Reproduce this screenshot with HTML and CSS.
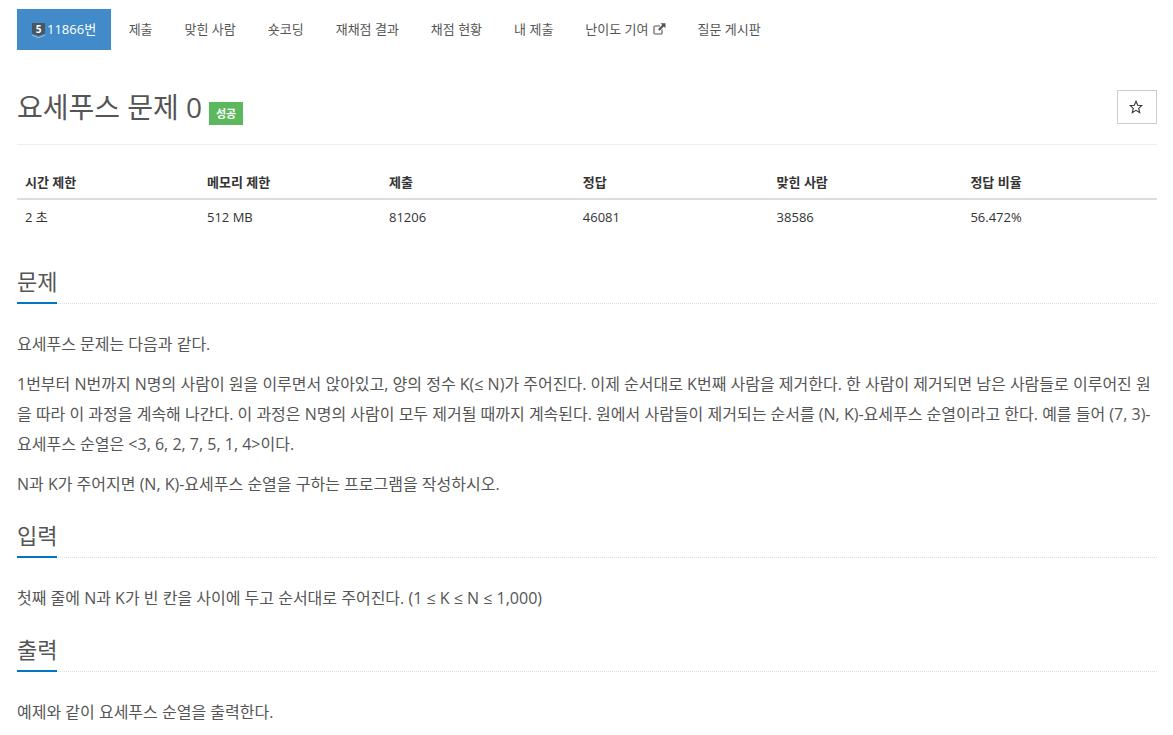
FILE: index.html
```html
<!DOCTYPE html>
<html lang="ko">
<head>
  <meta charset="UTF-8">
  <title>11866번: 요세푸스 문제 0</title>
  <link rel="stylesheet" href="styles.css">
</head>
<body>
  <ul class="tabs">
    <li class="active">
      <a href="#">
        <svg class="tier" width="13" height="15" viewBox="0 0 13 15"><path d="M0 0H13V10.5L6.5 13 0 10.5Z" fill="#4a5563"/><path d="M0 12.2L6.5 14.6 13 12.2" fill="none" stroke="#a9bccd" stroke-width="1"/><text x="6.5" y="9.8" text-anchor="middle" class="tier-num">5</text></svg>
        11866번
      </a>
    </li>
    <li><a href="#">제출</a></li>
    <li><a href="#">맞힌 사람</a></li>
    <li><a href="#">숏코딩</a></li>
    <li><a href="#">재채점 결과</a></li>
    <li><a href="#">채점 현황</a></li>
    <li><a href="#">내 제출</a></li>
    <li>
      <a href="#">난이도 기여
        <svg class="ext" width="13" height="12" viewBox="0 0 13 12"><path d="M9 6.5V10a1 1 0 0 1-1 1H2a1 1 0 0 1-1-1V4a1 1 0 0 1 1-1h5" fill="none" stroke="#555" stroke-width="1.1"/><path d="M7.5 0.3H12.5V5.3L10.8 3.6 6.6 7.8 5 6.2 9.2 2Z" fill="#555"/></svg>
      </a>
    </li>
    <li><a href="#">질문 게시판</a></li>
  </ul>

  <div class="page-header">
    <h1>요세푸스 문제 0 <span class="label">성공</span></h1>
    <button class="star">
      <svg width="14" height="14" viewBox="0 0 14 14"><path d="M7 1.3L8.7 5.2 12.9 5.6 9.7 8.4 10.7 12.6 7 10.4 3.3 12.6 4.3 8.4 1.1 5.6 5.3 5.2Z" fill="none" stroke="#333" stroke-width="1.1"/></svg>
    </button>
  </div>

  <table class="info">
    <colgroup>
      <col class="c1"><col class="c1"><col class="c2"><col class="c2"><col class="c2"><col class="c3">
    </colgroup>
    <thead>
      <tr><th>시간 제한</th><th>메모리 제한</th><th>제출</th><th>정답</th><th>맞힌 사람</th><th>정답 비율</th></tr>
    </thead>
    <tbody>
      <tr><td>2 초</td><td>512 MB</td><td>81206</td><td>46081</td><td>38586</td><td>56.472%</td></tr>
    </tbody>
  </table>

  <section class="sec">
    <div class="headline"><h2>문제</h2></div>
    <p>요세푸스 문제는 다음과 같다.</p>
    <p>1번부터 N번까지 N명의 사람이 원을 이루면서 앉아있고, 양의 정수 K(≤ N)가 주어진다. 이제 순서대로 K번째 사람을 제거한다. 한 사람이 제거되면 남은 사람들로 이루어진 원을 따라 이 과정을 계속해 나간다. 이 과정은 N명의 사람이 모두 제거될 때까지 계속된다. 원에서 사람들이 제거되는 순서를 (N, K)-요세푸스 순열이라고 한다. 예를 들어 (7, 3)-요세푸스 순열은 &lt;3, 6, 2, 7, 5, 1, 4&gt;이다.</p>
    <p>N과 K가 주어지면 (N, K)-요세푸스 순열을 구하는 프로그램을 작성하시오.</p>
  </section>

  <section class="sec">
    <div class="headline"><h2>입력</h2></div>
    <p>첫째 줄에 N과 K가 빈 칸을 사이에 두고 순서대로 주어진다. (1 ≤ K ≤ N ≤ 1,000)</p>
  </section>

  <section class="sec">
    <div class="headline"><h2>출력</h2></div>
    <p>예제와 같이 요세푸스 순열을 출력한다.</p>
  </section>
</body>
</html>
```

FILE: styles.css
```css
body {
  margin: 0;
  padding: 9px 16px 0 17px;
  font-family: "Open Sans", "Noto Sans CJK KR", sans-serif;
  font-size: 13px;
  color: #555;
  background: #fff;
  overflow: hidden;
  height: 735px;
  box-sizing: border-box;
}
.tabs {
  display: flex;
  list-style: none;
  margin: 0;
  padding: 0;
}
.tabs a {
  display: flex;
  align-items: center;
  gap: 4px;
  height: 41px;
  padding: 0 16px 2px;
  box-sizing: border-box;
  color: #555;
  font-size: 13px;
  text-decoration: none;
  white-space: nowrap;
}
.tabs .active {
  margin-right: 1.5px;
}
.tabs .active a {
  background: #428bca;
  color: #fff;
  padding: 0 15px 2px 15px;
  gap: 2px;
}
.tier {
  margin-top: 4px;
}
.tier-num {
  font: bold 10px "Open Sans", sans-serif;
  fill: #fff;
}
.page-header {
  display: flex;
  justify-content: space-between;
  align-items: flex-start;
  margin-top: 40px;
  padding-bottom: 20px;
  border-bottom: 1px solid #eee;
}
h1 {
  margin: 0;
  height: 34px;
  font-size: 28px;
  font-weight: 400;
  line-height: 34px;
  color: #555;
}
.label {
  display: inline-block;
  background: #5cb85c;
  color: #fff;
  font-size: 11px;
  font-weight: 700;
  line-height: 23px;
  padding: 0 6.5px;
  vertical-align: 0;
}
.star {
  width: 40px;
  height: 34px;
  padding: 0 3px 0 0;
  background: #fff;
  border: 1px solid #ccc;
  display: flex;
  align-items: center;
  justify-content: center;
}
.info {
  width: 100%;
  margin-top: 20px;
  border-collapse: collapse;
  table-layout: fixed;
}
.c1 { width: 182px; }
.c2 { width: 193.8px; }
.info th, .info td {
  padding: 8px;
  text-align: left;
  font-size: 13px;
  line-height: 18px;
  color: #333;
}
.info th {
  font-weight: 700;
  border-bottom: 2px solid #ddd;
  padding: 8px 8px 7px;
}
.headline {
  margin: 23px 0 25px;
  border-bottom: 1px dotted #ddd;
}
.info + .sec .headline {
  margin-top: 34px;
}
h2 {
  display: inline-block;
  margin: 0 0 -1px;
  padding-bottom: 8px;
  border-bottom: 2px solid #0076c0;
  font-size: 22px;
  font-weight: 400;
  line-height: 26px;
  color: #555;
}
.sec p {
  margin: 0 0 10px;
  font-size: 16px;
  line-height: 30px;
  color: #555;
}
```
